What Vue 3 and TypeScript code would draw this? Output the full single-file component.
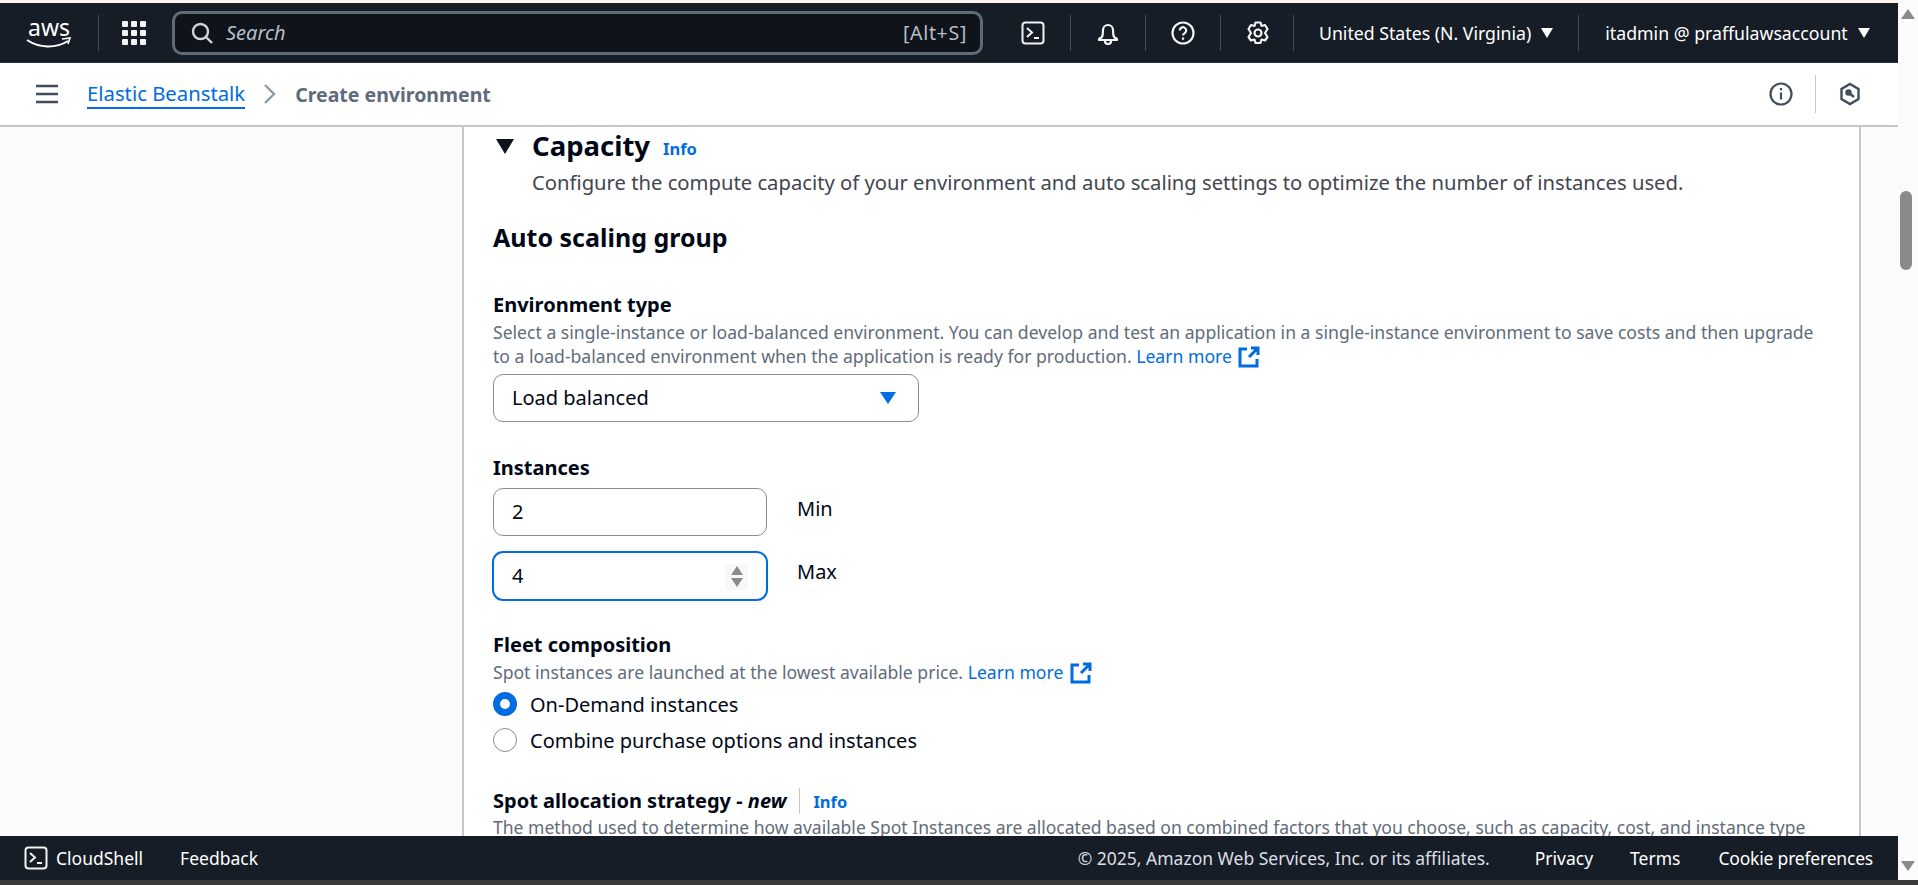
<template>
  <div class="page">
    <div class="app">
      <div class="strip"></div>
      <header class="topnav">
        <svg class="aws" width="48" height="36" viewBox="0 0 48 36">
          <text x="25" y="21" text-anchor="middle" class="aws-text">aws</text>
          <path d="M3 25c12 8 28 9 41 1" fill="none" stroke="#fff" stroke-width="2" />
          <path d="M38 24l8-1-2 6" fill="none" stroke="#fff" stroke-width="1.600" />
        </svg>
        <span class="nav-sep first"></span>
        <svg class="grid-ico" width="24" height="24" viewBox="0 0 24 24" fill="#f2f3f3">
          <template v-for="y in [0, 9, 18]" :key="y">
            <rect v-for="x in [0, 9, 18]" :key="x" :x="x" :y="y" width="6" height="6" rx="1" />
          </template>
        </svg>
        <div class="search">
          <svg width="24" height="24" viewBox="0 0 24 24" fill="none" stroke="#d1d5db" stroke-width="2.400">
            <circle cx="10.500" cy="10.500" r="7.500" />
            <path d="M16 16l6 6" />
          </svg>
          <span class="search-text">Search</span>
          <span class="search-key">[Alt+S]</span>
        </div>
        <button class="nav-ico shell">
          <svg width="24" height="24" viewBox="0 0 24 24" fill="none" stroke="#f2f3f3" stroke-width="2">
            <rect x="1.500" y="1.500" width="21" height="21" rx="3" />
            <path d="M6 7l5 4.500L6 16M13 17h5" />
          </svg>
        </button>
        <span class="nav-sep"></span>
        <button class="nav-ico">
          <svg width="24" height="24" viewBox="0 0 24 24" fill="none" stroke="#f2f3f3" stroke-width="2.200" stroke-linejoin="round">
            <path d="M6 16c1-2 1-4 1-7a5 5 0 0 1 10 0c0 3 0 5 1 7l3 2v1H3v-1z" />
            <path d="M9 20a3 3 0 0 0 6 0" />
          </svg>
        </button>
        <span class="nav-sep"></span>
        <button class="nav-ico">
          <svg width="24" height="24" viewBox="0 0 24 24" fill="none" stroke="#f2f3f3" stroke-width="2.200">
            <circle cx="12" cy="12" r="10.500" />
            <path d="M8.800 9.500a3.200 3.200 0 1 1 5 2.600c-1.200.8-1.800 1.300-1.800 2.400M12 16.500v2.200" />
          </svg>
        </button>
        <span class="nav-sep"></span>
        <button class="nav-ico gear">
          <svg width="24" height="24" viewBox="0 0 24 24" fill="none" stroke="#f2f3f3" stroke-width="2.200" stroke-linejoin="round">
            <circle cx="12" cy="12" r="3.500" />
            <path d="M9.500 1.500h5l1 3.500 3.500-1 2.500 4-2.500 4 2.500 4-2.500 3.500-3.500-1-1 3.500h-5l-1-3.500-3.500 1-2.500-3.500 2.500-4-2.500-4L5 4l3.500 1z" />
          </svg>
        </button>
        <span class="nav-sep"></span>
        <span class="nav-menu region">United States (N. Virginia) <i class="caret"></i></span>
        <span class="nav-sep"></span>
        <span class="nav-menu user">itadmin @ praffulawsaccount <i class="caret"></i></span>
      </header>

      <div class="crumbs">
        <svg class="burger" width="24" height="24" viewBox="0 0 24 24" fill="none" stroke="#414d5c" stroke-width="2.600">
          <path d="M1 4h22M1 12h22M1 20h22" />
        </svg>
        <a class="crumb-link">Elastic Beanstalk</a>
        <svg class="crumb-arrow" width="14" height="22" viewBox="0 0 14 22" fill="none" stroke="#8d99a8" stroke-width="2.400">
          <path d="M2 2l9 9-9 9" />
        </svg>
        <span class="crumb-current">Create environment</span>
        <div class="crumb-tools">
          <svg width="24" height="24" viewBox="0 0 24 24" fill="none" stroke="#414d5c" stroke-width="2.200">
            <circle cx="12" cy="12" r="10.500" />
            <path d="M12 10.500v7M12 6v2.200" />
          </svg>
          <span class="tool-sep"></span>
          <svg width="24" height="24" viewBox="0 0 24 24" fill="none" stroke="#414d5c" stroke-width="2.400">
            <path d="M12 2l8.500 5v10L12 22l-8.500-5V7z" />
            <circle cx="10.500" cy="10.500" r="2" fill="#414d5c" />
            <path d="M11 11l5 4" />
          </svg>
        </div>
      </div>

      <main class="content">
        <div class="side"></div>
        <section class="panel">
          <div class="capacity-head">
            <i class="expand"></i>
            <h2>Capacity</h2>
            <a class="info big">Info</a>
          </div>
          <p class="capacity-desc">
            Configure the compute capacity of your environment and auto scaling settings to optimize the number of instances used.
          </p>
          <h3>Auto scaling group</h3>

          <div class="field env">
            <label>Environment type</label>
            <p class="hint">
              Select a single-instance or load-balanced environment. You can develop and test an application in a single-instance environment to save costs and then upgrade to a load-balanced environment when the application is ready for production.
              <a class="learn">Learn more
                <svg width="22" height="22" viewBox="0 0 22 22" fill="none" stroke="#006ce0" stroke-width="3">
                  <path d="M9 3H2v17h17v-7M13 2h7v7M20 2l-9 9" />
                </svg>
              </a>
            </p>
            <div class="select">Load balanced<i class="select-caret"></i></div>
          </div>

          <div class="field instances">
            <label>Instances</label>
            <div class="num-row">
              <div class="input">2</div>
              <span>Min</span>
            </div>
            <div class="num-row focused">
              <div class="input">
                4
                <span class="spinner"><i class="up"></i><i class="down"></i></span>
              </div>
              <span>Max</span>
            </div>
          </div>

          <div class="field fleet">
            <label>Fleet composition</label>
            <p class="hint">
              Spot instances are launched at the lowest available price.
              <a class="learn">Learn more
                <svg width="22" height="22" viewBox="0 0 22 22" fill="none" stroke="#006ce0" stroke-width="3">
                  <path d="M9 3H2v17h17v-7M13 2h7v7M20 2l-9 9" />
                </svg>
              </a>
            </p>
            <div v-for="opt in fleetOptions" :key="opt.label" class="radio-row">
              <i class="radio" :class="{ on: opt.on }"></i>
              <span>{{ opt.label }}</span>
            </div>
          </div>

          <div class="field spot">
            <div class="spot-head">
              <label>Spot allocation strategy - <em>new</em></label>
              <span class="spot-sep"></span>
              <a class="info">Info</a>
            </div>
            <p class="hint nowrap">
              The method used to determine how available Spot Instances are allocated based on combined factors that you choose, such as capacity, cost, and instance type
            </p>
          </div>
        </section>
        <div class="side right"></div>
      </main>

      <footer class="footer">
        <svg width="24" height="24" viewBox="0 0 24 24" fill="none" stroke="#f2f3f3" stroke-width="2">
          <rect x="1.500" y="1.500" width="21" height="21" rx="3" />
          <path d="M6 7l5 4.500L6 16M13 17h5" />
        </svg>
        <span class="f-shell">CloudShell</span>
        <span class="f-feedback">Feedback</span>
        <span class="f-copy">© 2025, Amazon Web Services, Inc. or its affiliates.</span>
        <span class="f-link privacy">Privacy</span>
        <span class="f-link terms">Terms</span>
        <span class="f-link cookie">Cookie preferences</span>
      </footer>
    </div>
    <aside class="scrollbar">
      <i class="sb-up"></i>
      <div class="sb-track"><div class="sb-thumb"></div></div>
      <i class="sb-down"></i>
    </aside>
    <div class="bottom-strip"></div>
  </div>
</template>

<script setup lang="ts">
const fleetOptions = [
  { label: 'On-Demand instances', on: true },
  { label: 'Combine purchase options and instances', on: false },
]
</script>

<style>
html,
body {
  margin: 0;
  overflow: hidden;
}
</style>

<style scoped>
.page {
  position: relative;
  display: flex;
  width: 1918px;
  height: 885px;
  overflow: hidden;
  font-family: "Noto Sans", "Open Sans", sans-serif;
  font-size: 20px;
  color: #000716;
  background: #fff;
}
.app {
  width: 1898px;
  height: 880px;
  display: flex;
  flex-direction: column;
}
.strip {
  height: 3px;
  background: #fdf3ef;
  flex: none;
}
.topnav {
  height: 60px;
  flex: none;
  background: #161d26;
  border-bottom: 1px solid #2a3340;
  box-sizing: border-box;
  display: flex;
  align-items: center;
  padding-left: 24px;
  color: #fff;
  font-size: 17.700px;
}
.aws {
  flex: none;
  overflow: visible;
}
.aws-text {
  font-family: "Noto Sans", sans-serif;
  font-size: 23px;
  fill: #fff;
}
.nav-sep {
  width: 1px;
  height: 36px;
  background: #414d5c;
  flex: none;
}
.nav-sep.first {
  margin-left: 26px;
}
.grid-ico {
  margin: 0 26px 0 23px;
  flex: none;
}
.search {
  width: 811px;
  height: 44px;
  box-sizing: border-box;
  border: 3px solid #5f6b7a;
  border-radius: 10px;
  background: #0f141a;
  display: flex;
  align-items: center;
  padding: 0 13px 0 15px;
  flex: none;
}
.search-text {
  font-style: italic;
  font-size: 20px;
  color: #b6bec9;
  margin-left: 12px;
}
.search-key {
  margin-left: auto;
  font-size: 19.500px;
  letter-spacing: 0.7px;
  color: #b6bec9;
}
.nav-ico {
  background: none;
  border: 0;
  padding: 0;
  width: 24px;
  height: 24px;
  margin: 0 25px;
  flex: none;
}
.nav-ico.shell {
  margin: 0 25px 0 38px;
}
.nav-ico.gear {
  margin-right: 23px;
}
.nav-menu {
  display: flex;
  align-items: center;
  white-space: nowrap;
  gap: 8px;
}
.region {
  margin: 0 25px 0 25px;
}
.user {
  margin-left: 26px;
}
.caret {
  width: 0;
  height: 0;
  border-left: 6px solid transparent;
  border-right: 6px solid transparent;
  border-top: 10px solid #fff;
  margin-left: 2px;
}
.crumbs {
  height: 64px;
  flex: none;
  box-sizing: border-box;
  border-bottom: 2px solid #c6c6cd;
  background: #fff;
  display: flex;
  align-items: center;
  padding-left: 35px;
}
.burger {
  margin-right: 28px;
}
.crumb-link {
  color: #006ce0;
  font-size: 20.300px;
  border-bottom: 2px solid #006ce0;
}
.crumb-arrow {
  margin: 0 18px 0 18px;
}
.crumb-current {
  font-weight: 700;
  font-size: 19.500px;
  color: #5f6b7a;
}
.crumb-tools {
  margin-left: auto;
  margin-right: 36px;
  display: flex;
  align-items: center;
  gap: 22px;
}
.tool-sep {
  width: 1px;
  height: 38px;
  background: #c6c6cd;
}
.content {
  flex: 1;
  min-height: 0;
  overflow: hidden;
  display: flex;
  background: #fcfcfc;
}
.side {
  width: 462px;
  flex: none;
}
.side.right {
  width: 37px;
}
.panel {
  flex: 1;
  min-width: 0;
  background: #fff;
  border-left: 2px solid #c6c6cd;
  border-right: 2px solid #c6c6cd;
  padding: 0 0 0 29px;
  box-sizing: border-box;
}
.capacity-head {
  display: flex;
  align-items: center;
  height: 36px;
  margin-top: 1px;
}
.expand {
  width: 0;
  height: 0;
  border-left: 9px solid transparent;
  border-right: 9px solid transparent;
  border-top: 15px solid #0f141a;
  margin: 0 18px 0 3px;
}
h2 {
  font-size: 27.500px;
  font-weight: 700;
  margin: 0;
  line-height: 36px;
}
.info {
  color: #006ce0;
  font-weight: 700;
  font-size: 16.500px;
}
.info.big {
  margin: 4px 0 0 13px;
}
.capacity-desc {
  margin: 6px 0 0 39px;
  line-height: 24px;
  font-size: 20.230px;
  color: #424650;
}
h3 {
  font-size: 25px;
  font-weight: 700;
  margin: 27px 0 0;
  line-height: 32px;
}
.field label {
  display: block;
  font-weight: 700;
  font-size: 20px;
  line-height: 24px;
}
.hint {
  margin: 2.500px 0 0;
  font-size: 17.600px;
  line-height: 24.500px;
  color: #5f6b7a;
  width: 1335px;
}
.hint.nowrap {
  white-space: nowrap;
  width: auto;
  margin-top: 0;
  font-size: 17.540px;
}
.learn {
  color: #006ce0;
}
.learn svg {
  vertical-align: -5px;
  margin-left: 2px;
}
.env {
  margin-top: 40px;
}
.select {
  width: 426px;
  height: 48px;
  margin-top: 5px;
  box-sizing: border-box;
  border: 1px solid #8c8c94;
  border-radius: 10px;
  display: flex;
  align-items: center;
  padding-left: 18px;
  position: relative;
}
.select-caret {
  position: absolute;
  right: 22px;
  top: 17px;
  width: 0;
  height: 0;
  border-left: 8px solid transparent;
  border-right: 8px solid transparent;
  border-top: 12px solid #006ce0;
}
.instances {
  margin-top: 34px;
}
.num-row {
  display: flex;
  align-items: flex-start;
  margin-top: 8px;
  height: 48px;
}
.num-row + .num-row {
  margin-top: 15px;
  height: 50px;
}
.num-row > span {
  margin-left: 30px;
  line-height: 24px;
  margin-top: 9px;
}
.input {
  width: 274px;
  height: 48px;
  box-sizing: border-box;
  border: 1px solid #8c8c94;
  border-radius: 10px;
  display: flex;
  align-items: center;
  padding-left: 18px;
  position: relative;
}
.focused .input {
  width: 276px;
  height: 50px;
  margin-left: -1px;
  border: 2px solid #006ce0;
  border-radius: 11px;
}
.focused > span {
  margin-left: 29px;
}
.spinner {
  position: absolute;
  right: 18px;
  top: 11px;
  width: 23px;
  height: 26px;
  background: #f8f8f8;
  display: flex;
  flex-direction: column;
  align-items: center;
  justify-content: center;
  gap: 3px;
}
.spinner i {
  width: 0;
  height: 0;
  border-left: 6.500px solid transparent;
  border-right: 6.500px solid transparent;
}
.spinner .up {
  border-bottom: 9px solid #8b8b8b;
}
.spinner .down {
  border-top: 9px solid #8b8b8b;
}
.fleet {
  margin-top: 32px;
}
.fleet .hint {
  margin-top: 3px;
}
.radio-row {
  display: flex;
  align-items: center;
  height: 24px;
  margin-top: 8px;
}
.radio-row + .radio-row {
  margin-top: 12px;
}
.radio {
  width: 24px;
  height: 24px;
  box-sizing: border-box;
  border: 1.500px solid #8c8c94;
  border-radius: 50%;
  margin-right: 13px;
}
.radio.on {
  border: 7px solid #006ce0;
}
.spot {
  margin-top: 35px;
}
.spot-head {
  display: flex;
  align-items: center;
  height: 28px;
}
.spot-sep {
  width: 1px;
  height: 26px;
  background: #c6c6cd;
  margin: 0 13px;
}
.footer {
  height: 44px;
  flex: none;
  background: #161d26;
  color: #fff;
  display: flex;
  align-items: center;
  padding-left: 24px;
  position: relative;
  z-index: 1;
  font-size: 17.500px;
}
.f-shell {
  margin-left: 8px;
}
.f-feedback {
  margin-left: 37px;
}
.f-copy {
  margin-left: auto;
  color: #dbdfe4;
}
.f-link.privacy {
  margin-left: 45px;
}
.f-link.terms {
  margin-left: 37px;
}
.f-link.cookie {
  margin: 0 25px 0 38px;
  letter-spacing: -0.2px;
}
.scrollbar {
  width: 20px;
  flex: none;
  background: #fbfbfb;
  height: 880px;
  position: relative;
}
.sb-up,
.sb-down {
  position: absolute;
  left: 3px;
  width: 0;
  height: 0;
  border-left: 7px solid transparent;
  border-right: 7px solid transparent;
}
.sb-up {
  top: 9px;
  border-bottom: 10px solid #8a8a8a;
}
.sb-down {
  bottom: 9px;
  border-top: 10px solid #8a8a8a;
}
.sb-thumb {
  position: absolute;
  top: 191px;
  left: 2px;
  width: 12px;
  height: 79px;
  border-radius: 6px;
  background: #8a8a8a;
}
.bottom-strip {
  position: absolute;
  left: 0;
  right: 0;
  bottom: 0;
  height: 5px;
  background: #3a3a3a;
}
</style>
